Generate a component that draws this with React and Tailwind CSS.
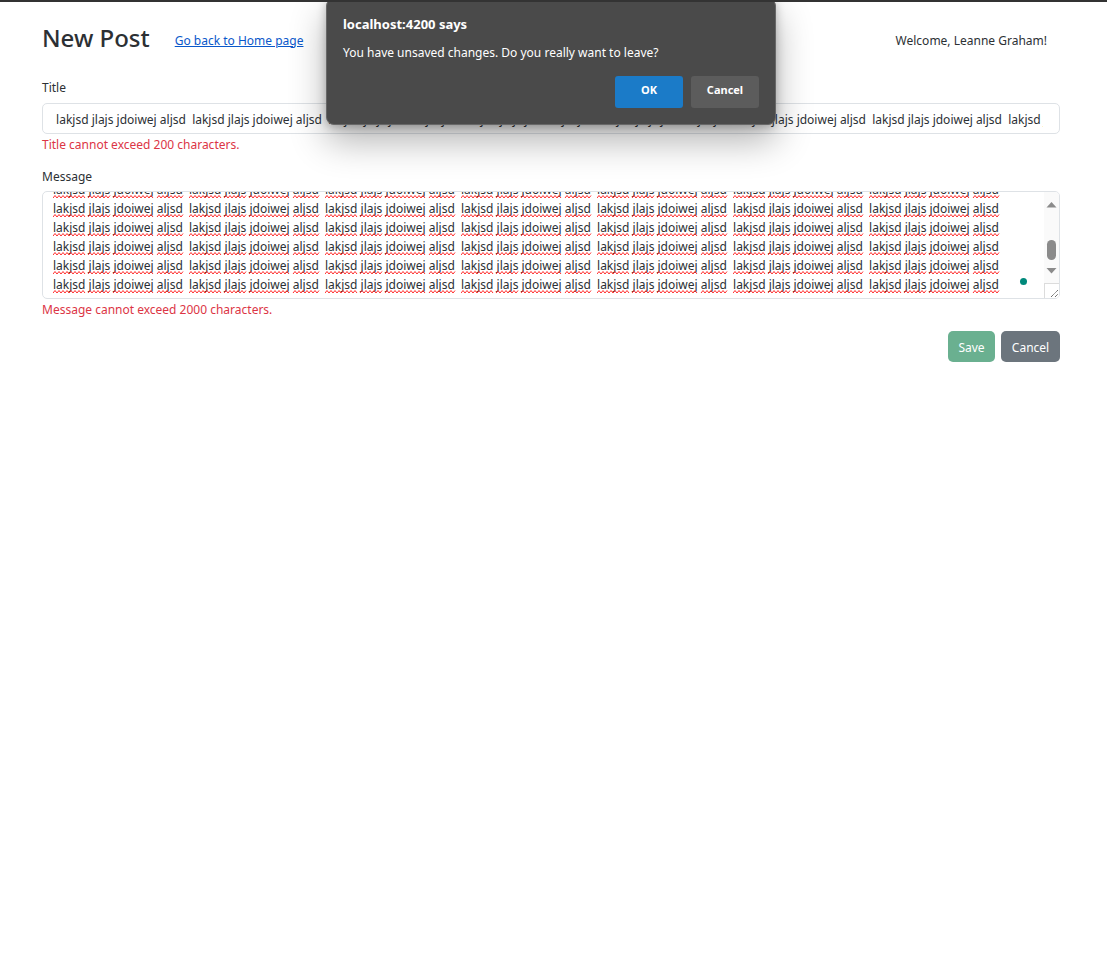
import React, { useEffect, useRef, useState } from 'react';

const PHRASE = 'lakjsd jlajs jdoiwej aljsd  ';
const TITLE = ' ' + PHRASE.repeat(12);
const MESSAGE = PHRASE.repeat(105);

// Red wave under each misspelled word; start and end of every word in one phrase.
const WORDS = [
  [0, 32],
  [35, 57],
  [60, 100],
  [104, 130],
];

function wave(start, end) {
  let d = `M${start} 18`;
  for (let x = start + 2, up = true; x <= end; x += 2, up = !up) {
    d += `L${x} ${up ? 15.5 : 18}`;
  }
  return d;
}

function SpellingMarks() {
  return (
    <svg
      aria-hidden="true"
      className="pointer-events-none absolute bottom-1 left-[10px]"
      width="951"
      height="102"
    >
      <defs>
        <pattern id="spelling" width="136" height="19" y="7" patternUnits="userSpaceOnUse">
          {WORDS.map(([start, end]) => (
            <path key={start} d={wave(start, end)} fill="none" stroke="#ff2a2a" strokeWidth="1" />
          ))}
        </pattern>
      </defs>
      <rect width="951" height="102" fill="url(#spelling)" />
    </svg>
  );
}

function ScrollRail() {
  return (
    <div aria-hidden="true" className="flex w-[15px] flex-col bg-[#fafafa]">
      <svg className="flex-1" viewBox="0 0 15 91" width="15">
        <path d="M2.5 15.500L7.5 10L12.500 15.500Z" fill="#8b8b8b" />
        <rect x="3" y="48" width="9" height="20" rx="4.500" fill="#8b8b8b" />
        <path d="M2.500 76L7.500 81.500L12.500 76Z" fill="#8b8b8b" />
      </svg>
      <svg className="border-t border-l border-[#dcdcdc] bg-white" viewBox="0 0 14 14" width="15" height="15">
        <path d="M6 13L13 6M10 13L13 10" stroke="#555" strokeWidth="1" strokeDasharray="1.200 0.500" fill="none" />
      </svg>
    </div>
  );
}

function LeaveDialog() {
  return (
    <div className="absolute inset-x-0 -top-1 flex justify-center pr-[5px]">
      <div
        role="alertdialog"
        aria-labelledby="leave-title"
        aria-describedby="leave-text"
        className="w-[450px] rounded-lg border border-[#686868] bg-[#4a4a4a] p-4 text-white shadow-[0_16px_36px_rgba(0,0,0,0.3),0_2px_10px_rgba(0,0,0,0.25)]"
      >
        <h2 id="leave-title" className="text-[13px] leading-[19px] font-bold">
          localhost:4200 says
        </h2>
        <p id="leave-text" className="mt-[9px] leading-[19px]">
          You have unsaved changes. Do you really want to leave?
        </p>
        <div className="mt-[14px] flex justify-end gap-2 text-[11px] leading-4 font-bold">
          <button type="button" className="h-8 w-[68px] rounded-[3px] bg-[#1b7bc8] pb-1">
            OK
          </button>
          <button type="button" className="h-8 w-[68px] rounded-[3px] bg-[#5c5c5c] pb-1">
            Cancel
          </button>
        </div>
      </div>
    </div>
  );
}

export default function App() {
  const [title, setTitle] = useState(TITLE);
  const [message, setMessage] = useState(MESSAGE);
  const box = useRef(null);

  useEffect(() => {
    box.current.scrollTop = box.current.scrollHeight;
  }, []);

  return (
    <div className="relative min-h-screen overflow-x-hidden border-t-2 border-[#333] bg-white font-['Noto_Sans','Open_Sans',sans-serif] text-[12px] leading-[19px] text-[#2c3034]">
      <main className="pt-5 pr-[47px] pl-[42px]">
        <header className="flex items-center pr-[13px]">
          <h1 className="text-[24px] leading-8 font-medium">New Post</h1>
          <a href="#home" className="mt-1 ml-[25px] text-[#0a58ca] underline">
            Go back to Home page
          </a>
          <span className="mt-1 ml-auto">Welcome, Leanne Graham!</span>
        </header>

        <form onSubmit={(e) => e.preventDefault()} className="pt-6">
          <label htmlFor="title" className="block">
            Title
          </label>
          <input
            id="title"
            type="text"
            spellCheck={false}
            value={title}
            onChange={(e) => setTitle(e.target.value)}
            className="mt-[6px] block h-[31px] w-full rounded-[5px] border border-[#dee2e6] pt-px pr-4 pl-[10px] outline-none"
          />
          <p className="mt-px text-[#dc3545]">Title cannot exceed 200 characters.</p>

          <label htmlFor="message" className="mt-[13px] block">
            Message
          </label>
          <div className="mt-[5px] flex h-[108px] overflow-hidden rounded-[5px] border border-[#dee2e6]">
            <div className="relative flex-1">
              <textarea
                id="message"
                ref={box}
                spellCheck={false}
                value={message}
                onChange={(e) => setMessage(e.target.value)}
                className="block h-full w-full resize-none py-1 pr-3 pl-[10px] outline-none [scrollbar-width:none]"
              />
              <SpellingMarks />
              <span className="absolute right-[17px] bottom-[13px] size-[7px] rounded-full bg-[#00897b]" />
            </div>
            <ScrollRail />
          </div>
          <p className="mt-px text-[#dc3545]">Message cannot exceed 2000 characters.</p>

          <div className="mt-3 flex justify-end gap-[6px] text-white">
            <button type="submit" disabled className="h-[31px] w-[47px] rounded-[5px] bg-[#6ab090] pt-px">
              Save
            </button>
            <button type="button" className="h-[31px] w-[59px] rounded-[5px] bg-[#6c757d] pt-px">
              Cancel
            </button>
          </div>
        </form>
      </main>
      <LeaveDialog />
    </div>
  );
}
